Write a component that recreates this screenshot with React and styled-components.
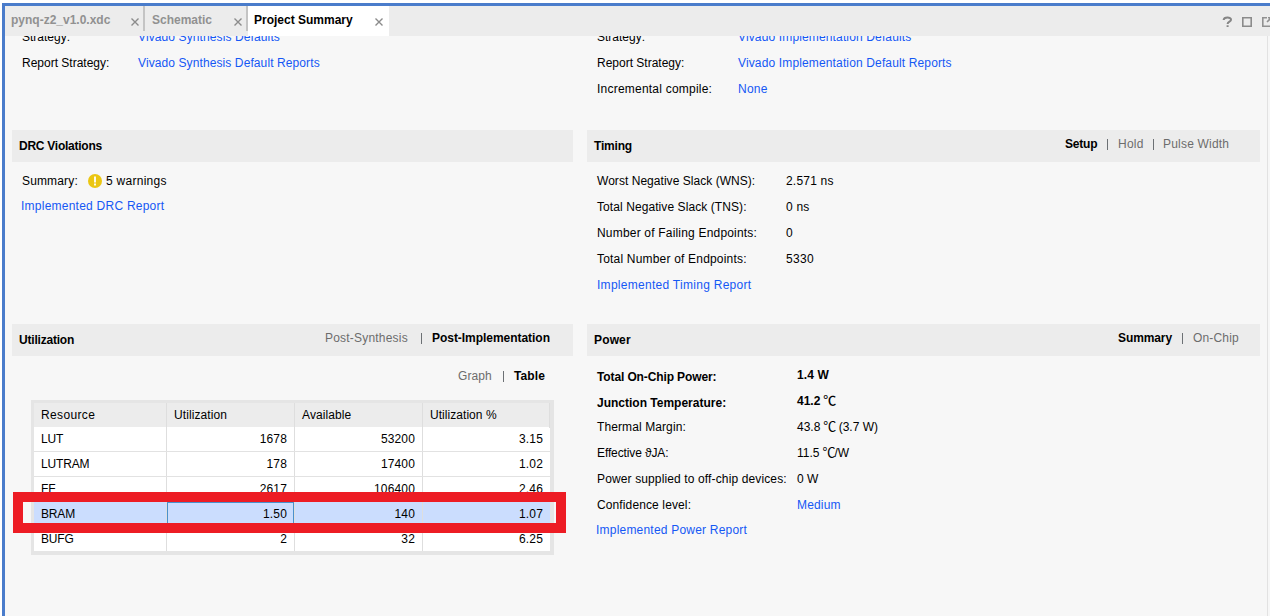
import React from "react";
import styled, { createGlobalStyle } from "styled-components";

const Global = createGlobalStyle`
  * { box-sizing: border-box; }
  body { margin: 0; background: #fff; overflow: hidden; }
`;

const Window = styled.div`
  width: 1270px;
  height: 616px;
  padding: 3px 0 0 2px;
  overflow: hidden;
  background: #fff;
  color: #000;
  font: 12px "Liberation Sans", Arial, "Noto Sans CJK SC", sans-serif;
  white-space: nowrap;
`;

const Frame = styled.div`
  height: 613px;
  display: flex;
  flex-direction: column;
  border: solid #4a7ccb;
  border-width: 3px 0 0 3px;
  background: #f7f7f7;
`;

const TabBar = styled.div`
  display: flex;
  flex: 0 0 30px;
  background: #ececec;
  overflow: hidden;
`;

const Tab = styled.div`
  display: flex;
  justify-content: space-between;
  width: ${(p) => p.$w}px;
  height: ${(p) => (p.$active ? 30 : 25)}px;
  padding: 0 ${(p) => (p.$active ? 6 : 4)}px 0 ${(p) => p.$left || 6}px;
  line-height: 28px;
  font-weight: bold;
  color: ${(p) => (p.$active ? "#000" : "#919191")};
  background: ${(p) => (p.$active ? "#fff" : "transparent")};
  border-right: ${(p) => (p.$active ? "0" : "2px solid #c4c4c4")};
`;

const CloseIcon = styled.svg`
  width: 8px;
  height: 8px;
  margin-top: 12px;
`;

const Tools = styled.div`
  display: flex;
  flex: none;
  margin-left: auto;
  width: 48px;
`;

const ToolIcon = styled.svg`
  flex: none;
  width: 12px;
  height: 12px;
  margin: 10px 8px 0 0;
`;

const Page = styled.div`
  flex: 1;
  display: flex;
  gap: 14px;
  width: 1263px;
  padding-left: 7px;
  border-right: 1px solid #e2e2e2;
  overflow: hidden;
`;

const Column = styled.div`
  display: flex;
  flex-direction: column;
  width: ${(p) => p.$w}px;
`;

const Section = styled.section`
  height: ${(p) => p.$h}px;
  padding: ${(p) => p.$pad || "0"};
`;

const Header = styled.header`
  display: flex;
  flex: none;
  justify-content: space-between;
  height: 32px;
  padding: 0 ${(p) => p.$right || 0}px 0 7px;
  background: #ececec;
  font-weight: bold;
  line-height: 32px;
`;

const Title = styled.span`
  letter-spacing: ${(p) => p.$ls || 0}px;
`;

const Options = styled.div`
  display: flex;
  line-height: 28px;
`;

const Option = styled.span`
  width: ${(p) => p.$w}px;
  font-weight: ${(p) => (p.$on ? "bold" : "normal")};
  color: ${(p) => (p.$on ? "#000" : "#6c6c6c")};
  letter-spacing: ${(p) => p.$ls || 0}px;
`;

const Divider = styled.span`
  width: 1px;
  height: 11px;
  margin: 9px ${(p) => p.$gap}px 0 0;
  background: #6c7074;
`;

const Row = styled.div`
  display: flex;
  height: ${(p) => p.$h || 26}px;
  line-height: ${(p) => p.$h || 26}px;
  margin-bottom: ${(p) => p.$after || 0}px;
  padding-left: 10px;
  font-weight: ${(p) => (p.$bold ? "bold" : "normal")};
`;

const Label = styled.span`
  width: ${(p) => p.$w}px;
  letter-spacing: ${(p) => p.$ls || 0}px;
`;

const Value = styled.span`
  display: flex;
  letter-spacing: ${(p) => p.$ls || 0}px;
  margin-top: ${(p) => p.$up || 0}px;
`;

const Link = styled.a`
  color: #1558f5;
  letter-spacing: ${(p) => p.$ls || 0}px;
  margin-left: ${(p) => p.$shift || 0}px;
`;

const Celsius = styled.span`
  width: 12px;
  margin: -1px 0 0 3px;
  font-family: "Noto Sans CJK SC", sans-serif;
  font-size: 13px;
  font-weight: ${(p) => (p.$strong ? 500 : 400)};
`;

const WarningIcon = styled.svg`
  width: 14px;
  height: 14px;
  margin: 6px 4px 0 0;
`;

const ViewBar = styled.div`
  display: flex;
  justify-content: flex-end;
  height: 44px;
  padding: 6px 27px 0 0;
  line-height: 28px;
`;

const TableBox = styled.div`
  position: relative;
  width: 523px;
  height: 155px;
  margin-left: 19px;
  border: solid #e5e5e5;
  border-width: 3px 4px 4px 3px;
`;

const TableRow = styled.div`
  display: grid;
  grid-template-columns: 133px 128px 128px 127px;
  height: ${(p) => (p.$head ? 24 : 25)}px;
  line-height: ${(p) => (p.$head ? 25 : 24)}px;
  background: ${(p) => (p.$head ? "#ececec" : p.$selected ? "#cbddfe" : "#fff")};
  border-bottom: ${(p) => (p.$head ? "0" : "1px solid #e2e2e2")};
  &:last-of-type { border-bottom: 0; height: 24px; }
`;

const Cell = styled.div`
  padding: 0 ${(p) => (p.$last ? 6 : 7)}px 0 7px;
  text-align: ${(p) => (p.$num ? "right" : "left")};
  border-right: 1px solid ${(p) => (p.$last ? "transparent" : "#dedede")};
  letter-spacing: ${(p) => p.$ls || 0}px;
  box-shadow: ${(p) => (p.$focus ? "inset 0 0 0 1px #4a90cc" : "none")};
`;

const Highlight = styled.aside`
  position: absolute;
  left: -21px;
  top: 89px;
  width: 553px;
  height: 41px;
  border: 10px solid #ed1c24;
`;

const Close = () => (
  <CloseIcon viewBox="0 0 8 8" fill="none" stroke="#8b8b8b" strokeWidth="1.4">
    <path d="M.5 .5L7.5 7.5M7.5 .5L.5 7.5" />
  </CloseIcon>
);

const data = [
  ["LUT", "1678", "53200", "3.15"],
  ["LUTRAM", "178", "17400", "1.02"],
  ["FF", "2617", "106400", "2.46"],
  ["BRAM", "1.50", "140", "1.07"],
  ["BUFG", "2", "32", "6.25"],
];

export default function App() {
  return (
    <Window>
      <Global />
      <Frame>
        <TabBar>
          <Tab $w={140}>pynq-z2_v1.0.xdc<Close /></Tab>
          <Tab $w={103} $left={7}>Schematic<Close /></Tab>
          <Tab $w={141} $active>Project Summary<Close /></Tab>
          <Tools>
            <ToolIcon viewBox="0 0 12 12" fill="none" stroke="#858585" strokeWidth="2">
              <path d="M1.6 4C2 0.8 9.2 0.8 9 3.8C8.8 5.6 5.6 5.6 5.6 8M5.6 9.2V11" />
            </ToolIcon>
            <ToolIcon viewBox="0 0 12 12" fill="none" stroke="#8b8b8b" strokeWidth="1.6">
              <path d="M.8 1.8H9.2V10.2H.8Z" />
            </ToolIcon>
            <ToolIcon viewBox="0 0 12 12" fill="none" stroke="#919191" strokeWidth="1.6">
              <path d="M5 1.8H.8V10.2H10V7M5 6L9 2M6 1.8H10" />
            </ToolIcon>
          </Tools>
        </TabBar>
        <Page>
          <Column $w={561}>
            <Section $h={94}>
              <Row $h={3}>
                <Label $w={116}>Strategy:</Label>
                <Link $ls={0.11}>Vivado Synthesis Defaults</Link>
              </Row>
              <Row $h={49}>
                <Label $w={116}>Report Strategy:</Label>
                <Link $ls={0.1}>Vivado Synthesis Default Reports</Link>
              </Row>
            </Section>
            <Header><Title $ls={-0.25}>DRC Violations</Title></Header>
            <Section $h={162} $pad="6px 0 0">
              <Row>
                <Label $w={66} $ls={0.15}>Summary:</Label>
                <WarningIcon viewBox="0 0 14 14">
                  <circle cx="7" cy="7" r="7" fill="#ebc611" />
                  <path d="M7 2.6V8.4M7 9.6V11.4" stroke="#fff" strokeWidth="1.8" />
                </WarningIcon>
                <Value $ls={0.27}>5 warnings</Value>
              </Row>
              <Row $h={24}><Link $shift={-1} $ls={0.24}>Implemented DRC Report</Link></Row>
            </Section>
            <Header $right={23}>
              <Title $ls={-0.2}>Utilization</Title>
              <Options>
                <Option $w={96} $ls={0.2}>Post-Synthesis</Option>
                <Divider $gap={10} />
                <Option $on $w={118} $ls={-0.04}>Post-Implementation</Option>
              </Options>
            </Header>
            <ViewBar>
              <Option $w={45} $ls={0.1}>Graph</Option>
              <Divider $gap={10} />
              <Option $on $w={32} $ls={0.1}>Table</Option>
            </ViewBar>
            <TableBox>
              <TableRow $head>
                <Cell $ls={0.35}>Resource</Cell>
                <Cell $ls={0.1}>Utilization</Cell>
                <Cell $ls={0.1}>Available</Cell>
                <Cell $ls={0.05}>Utilization %</Cell>
              </TableRow>
              {data.map((r, i) => (
                <TableRow key={r[0]} $selected={i === 3}>
                  {r.map((v, j) => (
                    <Cell key={j} $num={j > 0} $last={j === 3} $focus={i === 3 && j === 1} $ls={j ? 0.15 : -0.15}>{v}</Cell>
                  ))}
                </TableRow>
              ))}
              <Highlight />
            </TableBox>
          </Column>
          <Column $w={673}>
            <Section $h={94}>
              <Row $h={3}>
                <Label $w={141}>Strategy:</Label>
                <Link $ls={0.14}>Vivado Implementation Defaults</Link>
              </Row>
              <Row $h={49}>
                <Label $w={141}>Report Strategy:</Label>
                <Link $ls={0.14}>Vivado Implementation Default Reports</Link>
              </Row>
              <Row $h={3}>
                <Label $w={141} $ls={0.22}>Incremental compile:</Label>
                <Link $ls={0.25}>None</Link>
              </Row>
            </Section>
            <Header $right={31}>
              <Title $ls={-0.2}>Timing</Title>
              <Options>
                <Option $on $w={42} $ls={-0.2}>Setup</Option>
                <Divider $gap={10} />
                <Option $w={35} $ls={0.25}>Hold</Option>
                <Divider $gap={9} />
                <Option $w={66} $ls={0.2}>Pulse Width</Option>
              </Options>
            </Header>
            <Section $h={162} $pad="6px 0 0">
              <Row><Label $w={189} $ls={0.04}>Worst Negative Slack (WNS):</Label><Value $ls={0.2}>2.571 ns</Value></Row>
              <Row><Label $w={189} $ls={0.08}>Total Negative Slack (TNS):</Label><Value $ls={0.2}>0 ns</Value></Row>
              <Row><Label $w={189} $ls={0.19}>Number of Failing Endpoints:</Label><Value>0</Value></Row>
              <Row><Label $w={189} $ls={0.19}>Total Number of Endpoints:</Label><Value $ls={0.3}>5330</Value></Row>
              <Row><Link $ls={0.28}>Implemented Timing Report</Link></Row>
            </Section>
            <Header $right={21}>
              <Title $ls={0.15}>Power</Title>
              <Options>
                <Option $on $w={64} $ls={-0.1}>Summary</Option>
                <Divider $gap={10} />
                <Option $w={46} $ls={0.17}>On-Chip</Option>
              </Options>
            </Header>
            <Section $h={260} $pad="8px 0 0">
              <Row $bold><Label $w={200} $ls={-0.12}>Total On-Chip Power:</Label><Value $up={-2} $ls={0.15}>1.4 W</Value></Row>
              <Row $bold><Label $w={200}>Junction Temperature:</Label><Value $up={-2}>41.2<Celsius $strong>℃</Celsius></Value></Row>
              <Row $h={22} $after={2}><Label $w={200} $ls={0.1}>Thermal Margin:</Label><Value>43.8<Celsius>℃</Celsius>&nbsp;(3.7 W)</Value></Row>
              <Row><Label $w={200} $ls={-0.12}>Effective ϑJA:</Label><Value>11.5<Celsius>℃</Celsius>/W</Value></Row>
              <Row><Label $w={200} $ls={0.13}>Power supplied to off-chip devices:</Label><Value>0 W</Value></Row>
              <Row><Label $w={200} $ls={0.12}>Confidence level:</Label><Link $ls={0.17}>Medium</Link></Row>
              <Row $h={24}><Link $shift={-1} $ls={0.21}>Implemented Power Report</Link></Row>
            </Section>
          </Column>
        </Page>
      </Frame>
    </Window>
  );
}
